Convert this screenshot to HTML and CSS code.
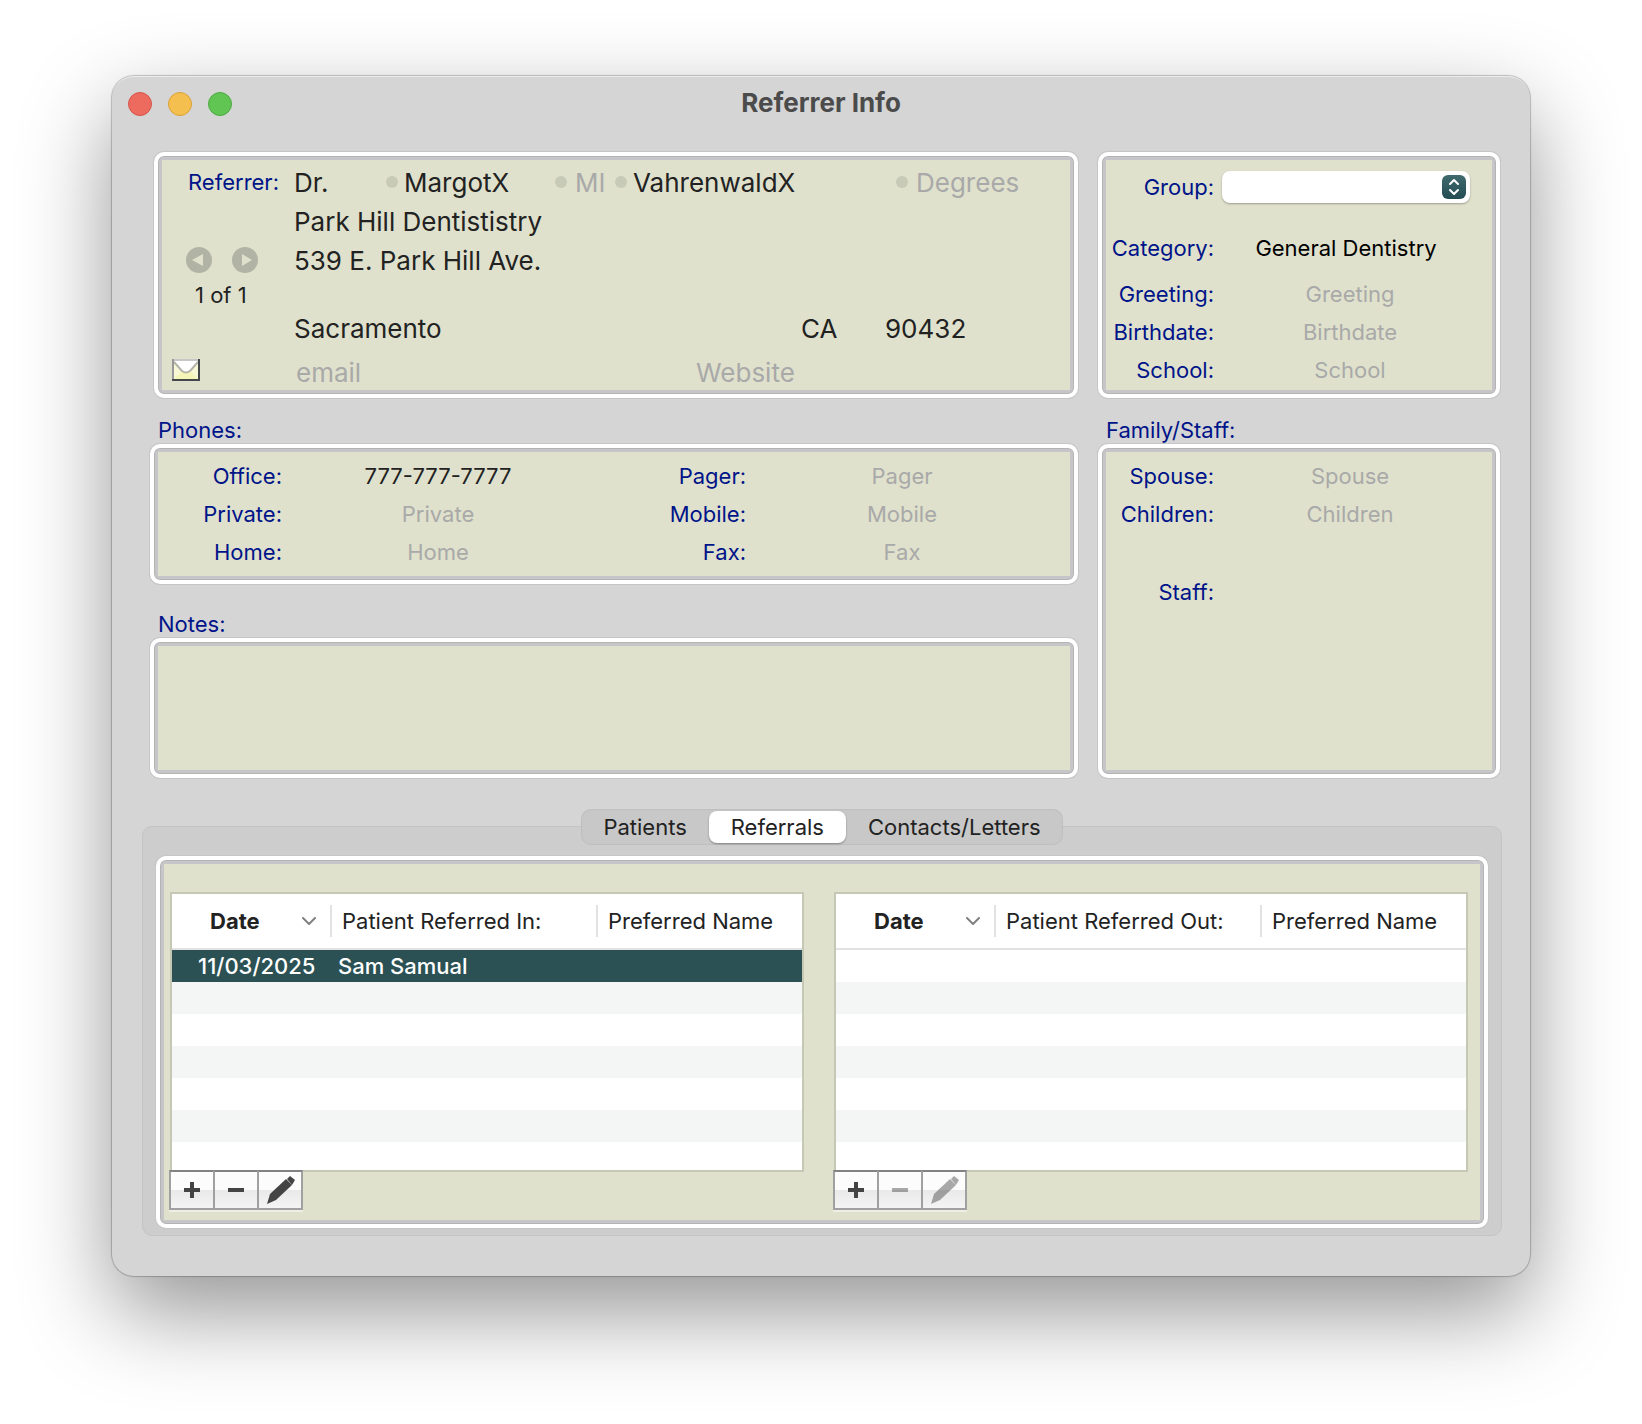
FILE: index.html
```
<!DOCTYPE html>
<html lang="en">
<head>
    <meta charset="UTF-8">
    <meta name="viewport" content="width=device-width, initial-scale=1.0">
    <title>Referrer Info</title>
    <link rel="stylesheet" href="styles.css">
</head>
<body>
    <main class="window">
        <header class="titlebar">
            <div class="lights">
                <button type="button" class="light close" aria-label="Close"></button>
                <button type="button" class="light minimize" aria-label="Minimize"></button>
                <button type="button" class="light zoom" aria-label="Zoom"></button>
            </div>
            <h1>Referrer Info</h1>
        </header>

        <form class="info">
            <div class="column">
                <section class="panel referrer">
                    <label class="label" for="prefix">Referrer:</label>
                    <div class="name-row">
                        <input id="prefix" type="text" value="Dr.">
                        <span class="dot"></span>
                        <input type="text" aria-label="First name" value="MargotX">
                        <span class="dot"></span>
                        <input type="text" aria-label="Middle initial" placeholder="MI">
                        <span class="dot"></span>
                        <input type="text" aria-label="Last name" value="VahrenwaldX">
                        <span class="dot"></span>
                        <input type="text" aria-label="Degrees" placeholder="Degrees">
                    </div>
                    <input class="practice" type="text" aria-label="Practice" value="Park Hill Dentististry">
                    <div class="nav">
                        <button type="button" aria-label="Previous" disabled>
                            <svg viewBox="0 0 26 26"><circle cx="13" cy="13" r="13" fill="#b1b4a4"/><path d="M6 13l11-6v12z" fill="#dfe1cc"/></svg>
                        </button>
                        <button type="button" aria-label="Next" disabled>
                            <svg viewBox="0 0 26 26"><circle cx="13" cy="13" r="13" fill="#b1b4a4"/><path d="M20 13L10 7v12z" fill="#dfe1cc"/></svg>
                        </button>
                    </div>
                    <input type="text" aria-label="Street" value="539 E. Park Hill Ave.">
                    <span class="count">1 of 1</span>
                    <div class="city-row">
                        <input type="text" aria-label="City" value="Sacramento">
                        <input type="text" aria-label="State" value="CA">
                        <input type="text" aria-label="Zip" value="90432">
                    </div>
                    <button type="button" class="mail" aria-label="Send email">
                        <svg viewBox="0 0 28 22">
                            <rect width="28" height="22" fill="#f8f8d6"/>
                            <path d="M2 1h24l-8 10q-4 4-8 0z" fill="#fff"/>
                            <path d="M2 20l8-8q4 4 8 0l8 8z" fill="#f6f5b8"/>
                            <path d="M2 3l8 9q4 3 8 0l8-9" fill="none" stroke="#b4b4ac" stroke-width="2"/>
                            <path d="M0 1h28" stroke="#c8c8c8" stroke-width="2"/>
                            <path d="M1 0v22" stroke="#999" stroke-width="2"/>
                            <path d="M0 21h28M27 0v22" stroke="#45484a" stroke-width="2"/>
                        </svg>
                    </button>
                    <div class="web-row">
                        <input type="email" aria-label="Email" placeholder="email">
                        <input type="url" aria-label="Website" placeholder="Website">
                    </div>
                </section>

                <h2>Phones:</h2>
                <section class="panel phones">
                    <label class="label" for="office">Office:</label>
                    <input id="office" type="tel" value="777-777-7777">
                    <label class="label" for="pager">Pager:</label>
                    <input id="pager" type="tel" placeholder="Pager">
                    <label class="label" for="private">Private:</label>
                    <input id="private" type="tel" placeholder="Private">
                    <label class="label" for="mobile">Mobile:</label>
                    <input id="mobile" type="tel" placeholder="Mobile">
                    <label class="label" for="home">Home:</label>
                    <input id="home" type="tel" placeholder="Home">
                    <label class="label" for="fax">Fax:</label>
                    <input id="fax" type="tel" placeholder="Fax">
                </section>

                <h2 class="notes-title"><label for="notes">Notes:</label></h2>
                <section class="panel">
                    <textarea id="notes"></textarea>
                </section>
            </div>

            <div class="column">
                <section class="panel details">
                    <div class="field group">
                        <label class="label" for="group">Group:</label>
                        <span class="popup">
                            <select id="group"><option></option></select>
                            <span class="popup-arrows">
                                <svg viewBox="0 0 24 24"><path d="M8 9l4-4 4 4M8 15l4 4 4-4" fill="none" stroke="#fff" stroke-width="2" stroke-linecap="round" stroke-linejoin="round"/></svg>
                            </span>
                        </span>
                    </div>
                    <div class="field category">
                        <label class="label" for="category">Category:</label>
                        <input id="category" type="text" value="General Dentistry" readonly>
                    </div>
                    <div class="field greeting">
                        <label class="label" for="greeting">Greeting:</label>
                        <input id="greeting" type="text" placeholder="Greeting">
                    </div>
                    <div class="field">
                        <label class="label" for="birthdate">Birthdate:</label>
                        <input id="birthdate" type="text" placeholder="Birthdate">
                    </div>
                    <div class="field">
                        <label class="label" for="school">School:</label>
                        <input id="school" type="text" placeholder="School">
                    </div>
                </section>

                <h2>Family/Staff:</h2>
                <section class="panel family">
                    <div class="field">
                        <label class="label" for="spouse">Spouse:</label>
                        <input id="spouse" type="text" placeholder="Spouse">
                    </div>
                    <div class="field">
                        <label class="label" for="children">Children:</label>
                        <input id="children" type="text" placeholder="Children">
                    </div>
                    <div class="field staff">
                        <label class="label" for="staff">Staff:</label>
                        <input id="staff" type="text">
                    </div>
                </section>
            </div>
        </form>

        <section class="tabview">
            <div class="tabs" role="tablist">
                <button type="button" role="tab" aria-selected="false">Patients</button>
                <button type="button" role="tab" aria-selected="true">Referrals</button>
                <button type="button" role="tab" aria-selected="false">Contacts/Letters</button>
            </div>
            <div class="tabbox">
                <div class="panel referrals" role="tabpanel">
                    <div class="list">
                        <div class="table-wrap">
                            <table>
                                <thead>
                                    <tr>
                                        <th class="date"><button type="button">Date <svg viewBox="0 0 14 9"><path d="M1 1l6 6 6-6" fill="none" stroke="#808080" stroke-width="2" stroke-linecap="round" stroke-linejoin="round"/></svg></button></th>
                                        <th>Patient Referred In:</th>
                                        <th class="preferred">Preferred Name</th>
                                    </tr>
                                </thead>
                                <tbody>
                                    <tr class="selected"><td>11/03/2025</td><td>Sam Samual</td><td></td></tr>
                                    <tr><td></td><td></td><td></td></tr>
                                    <tr><td></td><td></td><td></td></tr>
                                    <tr><td></td><td></td><td></td></tr>
                                    <tr><td></td><td></td><td></td></tr>
                                    <tr><td></td><td></td><td></td></tr>
                                    <tr><td></td><td></td><td></td></tr>
                                </tbody>
                            </table>
                        </div>
                        <div class="actions">
                            <button type="button" aria-label="Add"><svg viewBox="0 0 40 36"><path d="M12 18h16M20 10v16" stroke="#444" stroke-width="4"/></svg></button>
                            <button type="button" aria-label="Remove"><svg viewBox="0 0 40 36"><path d="M12 18h16" stroke="#444" stroke-width="4"/></svg></button>
                            <button type="button" aria-label="Edit"><svg viewBox="0 0 40 36"><path d="M7 32l3-10L26 7l6 6-16 15z" fill="#444"/><path d="M27 7l3-3 5 4-3 5z" fill="#444"/></svg></button>
                        </div>
                    </div>
                    <div class="list">
                        <div class="table-wrap">
                            <table>
                                <thead>
                                    <tr>
                                        <th class="date"><button type="button">Date <svg viewBox="0 0 14 9"><path d="M1 1l6 6 6-6" fill="none" stroke="#808080" stroke-width="2" stroke-linecap="round" stroke-linejoin="round"/></svg></button></th>
                                        <th>Patient Referred Out:</th>
                                        <th class="preferred">Preferred Name</th>
                                    </tr>
                                </thead>
                                <tbody>
                                    <tr><td></td><td></td><td></td></tr>
                                    <tr><td></td><td></td><td></td></tr>
                                    <tr><td></td><td></td><td></td></tr>
                                    <tr><td></td><td></td><td></td></tr>
                                    <tr><td></td><td></td><td></td></tr>
                                    <tr><td></td><td></td><td></td></tr>
                                    <tr><td></td><td></td><td></td></tr>
                                </tbody>
                            </table>
                        </div>
                        <div class="actions">
                            <button type="button" aria-label="Add"><svg viewBox="0 0 40 36"><path d="M12 18h16M20 10v16" stroke="#444" stroke-width="4"/></svg></button>
                            <button type="button" aria-label="Remove" disabled><svg viewBox="0 0 40 36"><path d="M12 18h16" stroke="#444" stroke-width="4"/></svg></button>
                            <button type="button" aria-label="Edit" disabled><svg viewBox="0 0 40 36"><path d="M7 32l3-10L26 7l6 6-16 15z" fill="#444"/><path d="M27 7l3-3 5 4-3 5z" fill="#444"/></svg></button>
                        </div>
                    </div>
                </div>
            </div>
        </section>
    </main>
</body>
</html>
```

FILE: styles.css
```
* { box-sizing: border-box; }
body { margin: 0; padding: 76px 112px 148px; background: #fff; color: #222; font-family: Inter, "Liberation Sans", sans-serif; font-size: 22px; }
button, input, select, textarea { font: inherit; color: inherit; margin: 0; padding: 0; border: 0; background: none; min-width: 0; }
svg { display: block; }

.window { background: #d5d5d5; border-radius: 22px; padding-bottom: 40px; box-shadow: inset 0 2px 0 -1px #ececec, 0 0 1px 1px rgba(0, 0, 0, 0.22), 0 36px 90px rgba(0, 0, 0, 0.42); }

/* title bar */
.titlebar { display: grid; grid-template-columns: 1fr auto 1fr; align-items: center; height: 56px; padding: 0 16px; }
.titlebar h1 { margin: 0; padding-bottom: 3px; font-size: 26px; font-weight: 700; color: #4b4b4b; }
.lights { display: flex; gap: 16px; }
.light { width: 24px; height: 24px; border-radius: 50%; border: 1px solid; }
.close { background: #ed6a5e; border-color: #d5554b; }
.minimize { background: #f5bf4f; border-color: #d9a13a; }
.zoom { background: #61c554; border-color: #4dab3f; }

/* panels */
.info { display: grid; grid-template-columns: 1fr 402px; gap: 20px; padding: 20px 30px 0 38px; }
.column { display: flex; flex-direction: column; min-width: 0; }
.panel { padding: 4px; border: 4px solid #fff; border-radius: 10px; background: linear-gradient(#dfe1cc, #dfe1cc) no-repeat center / calc(100% - 8px) calc(100% - 8px), #c6c6c8; box-shadow: 0 0 0 1px #c6c6c6, inset 0 0 0 1px #b4b4b6; }
h2 { margin: 20px 0 2px; padding-left: 8px; font-size: 22px; font-weight: 400; line-height: 24px; color: #001489; }
.notes-title { margin-top: 28px; }
.label { color: #001489; text-align: right; white-space: nowrap; }
::placeholder { color: #a9a9a9; opacity: 1; }

.referrer { margin-left: 4px; display: grid; grid-template-columns: 132px 1fr; grid-template-rows: 44px 34px 44px 25px 42px 41px; align-items: center; font-size: 26px; }
.referrer .label { padding-right: 15px; font-size: 22px; }
.referrer input { width: 100%; }
.referrer input:placeholder-shown { padding-left: 2px; }
.name-row { display: grid; grid-template-columns: 86px 12px 145px 12px 36px 12px 1fr 12px 156px; gap: 6px; align-items: center; }
.dot { width: 12px; height: 12px; border-radius: 50%; background: #c8cab8; }
.practice { grid-column: 2; }
.nav { display: flex; gap: 20px; padding-left: 24px; }
.nav svg { width: 26px; height: 26px; }
.count { font-size: 22px; padding-left: 33px; }
.city-row { grid-area: 5 / 2; display: grid; grid-template-columns: 1fr 84px 185px; }
.web-row { grid-area: 6 / 2; display: grid; grid-template-columns: 1fr 376px; padding-top: 5px; }
.mail { grid-area: 6 / 1; width: 28px; margin-left: 10px; }

.phones { display: grid; grid-template-columns: 124px 1fr 152px 1fr; grid-auto-rows: 38px; column-gap: 8px; align-items: center; padding: 9px 24px 9px 4px; }
.phones input { text-align: center; }
textarea { display: block; width: 100%; height: 124px; padding: 8px; resize: none; }

.details { height: 246px; }
.family { flex: 1; padding-top: 9px; }
.field { display: grid; grid-template-columns: 108px 256px; gap: 8px; align-items: center; height: 38px; }
.field input { text-align: center; }
.group { margin-top: 8px; }
.category { margin-top: 23px; color: #000; }
.category input { width: 248px; }
.greeting { margin-top: 8px; }
.staff { margin-top: 40px; }
.popup { position: relative; width: 248px; height: 32px; }
.popup select { appearance: none; width: 100%; height: 32px; border-radius: 8px; background: #fff; box-shadow: 0 1px 2px rgba(0, 0, 0, 0.3); }
.popup-arrows { position: absolute; top: 4px; right: 4px; width: 24px; height: 24px; border-radius: 6px; background: linear-gradient(#3f6a6e, #234d52); pointer-events: none; }

/* tabs */
.tabview { padding: 31px 28px 0 30px; }
.tabs { position: relative; display: flex; width: max-content; height: 36px; margin: 0 auto -19px; padding: 2px 0; border-radius: 10px; background: #c8c8c8; box-shadow: inset 0 0 1px 1px rgba(0, 0, 0, 0.05); }
.tabs button { padding: 0 22px; border-radius: 8px; }
.tabs button[aria-selected="true"] { background: #fff; box-shadow: 0 1px 2px rgba(0, 0, 0, 0.35); }
.tabbox { padding: 29px 13px 7px; background: #cdcdcd; border: 1px solid #c4c4c4; border-radius: 10px; }

/* referral lists */
.referrals { display: grid; grid-template-columns: 1fr 1fr; gap: 30px; padding: 32px 16px 14px 10px; }
.table-wrap { height: 280px; overflow: hidden; border: 2px solid #c5c8b5; background: #fff; }
table { width: 100%; table-layout: fixed; border-collapse: separate; border-spacing: 0; }
th { height: 56px; padding: 0 0 0 10px; text-align: left; font-weight: 400; white-space: nowrap; border-bottom: 2px solid #e2e2e2; background: linear-gradient(#e2e2e2, #e2e2e2) no-repeat right center / 2px 32px; }
th.date { width: 160px; padding: 0 16px 0 38px; }
th.preferred { width: 204px; background: none; }
th button { display: flex; width: 100%; justify-content: space-between; align-items: center; font-weight: 700; }
th svg { width: 14px; height: 9px; }
td { height: 32px; padding: 0 0 0 6px; white-space: nowrap; }
td:first-child { padding-left: 26px; }
tbody tr:nth-child(even) { background: #f4f6f5; }
.selected { background: #2b5154; color: #fff; font-weight: 500; }

.actions { position: relative; display: flex; margin: -2px 0 0 -1px; }
.actions button { width: 46px; height: 40px; border: 2px solid #a0a0a0; border-top-color: #828282; background: linear-gradient(#fcfcfc 0 50%, #e9e9e9 50%, #f4f4f4); box-shadow: 0 2px 0 #eeeee4; }
.actions button + button { margin-left: -2px; }
.actions svg { width: 40px; height: 36px; margin: auto; }
.actions button:disabled svg { opacity: 0.45; }
```
